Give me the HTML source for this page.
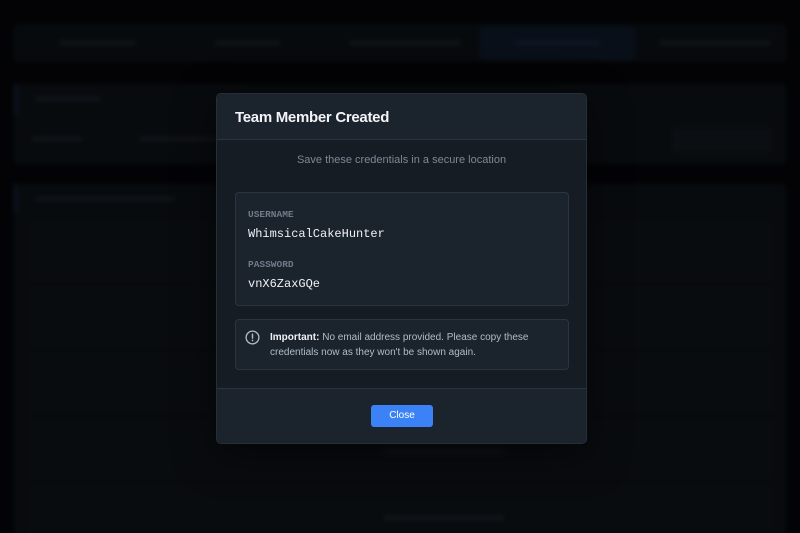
<!DOCTYPE html>
<html><head><style>
*{box-sizing:border-box;margin:0;padding:0}
html,body{width:800px;height:533px;overflow:hidden}
body{background:#050608;font-family:"Liberation Sans",sans-serif;position:relative}
.bg{position:absolute;inset:0;filter:blur(2px)}
.ov{position:absolute;inset:0;background:rgba(0,0,0,.35)}
.p{position:absolute;background:#0d1116;border-radius:4px}
.t{position:absolute;height:4px;background:#1a212a;border-radius:2px}
.modal{position:absolute;left:216px;top:93px;width:371px;height:351px;background:#161c24;border:1px solid #252e39;border-radius:5px;overflow:hidden;box-shadow:0 10px 40px rgba(0,0,0,.6)}
.hd{height:46px;background:#1b232d;border-bottom:1px solid #2a3440;padding:15px 18px;color:#f2f4f7;font-weight:bold;font-size:15px;letter-spacing:-.3px}
.sub{text-align:center;color:#7d8896;font-size:11px;margin-top:14px}
.cred{position:absolute;left:18px;top:98px;width:334px;height:114px;background:#1b232d;border:1px solid #2b3540;border-radius:4px;padding:16px 12px}
.lbl{font-family:"Liberation Mono",monospace;font-size:9.5px;color:#6f7b89;font-weight:bold}
.val{font-family:"Liberation Mono",monospace;font-size:12px;color:#f0f2f5;margin-top:7px;margin-bottom:18px}
.imp{position:absolute;left:18px;top:225px;width:334px;height:51px;background:#1b232d;border:1px solid #2b3540;border-radius:4px;padding:10px 12px 0 34px;font-size:10px;line-height:15px;color:#b3bcc6}
.imp b{color:#f0f2f5}
.ft{position:absolute;left:0;top:294px;width:100%;height:57px;background:#1b232d;border-top:1px solid #2a3440}
.btn{position:absolute;left:154px;top:16px;width:62px;height:22px;background:#3b82f6;border-radius:3px;color:#fff;font-size:10px;text-align:center;line-height:22px}
</style></head><body>
<div class="bg">
<div class="p" style="left:14px;top:24px;width:772px;height:38px;background:#0c1015"></div>
<div class="p" style="left:480px;top:26px;width:155px;height:34px;background:#0f1826"></div>
<div class="t" style="left:60px;top:41px;width:75px"></div>
<div class="t" style="left:215px;top:41px;width:65px"></div>
<div class="t" style="left:350px;top:41px;width:110px"></div>
<div class="t" style="left:515px;top:41px;width:85px;background:#15243a"></div>
<div class="t" style="left:660px;top:41px;width:110px"></div>
<div class="p" style="left:14px;top:84px;width:772px;height:80px"></div>
<div class="p" style="left:14px;top:84px;width:3px;height:32px;background:#14233a"></div>
<div class="t" style="left:35px;top:97px;width:65px"></div>
<div class="t" style="left:32px;top:137px;width:50px"></div>
<div class="t" style="left:140px;top:137px;width:80px"></div>
<div class="p" style="left:672px;top:127px;width:100px;height:26px;background:#11161c"></div>
<div class="p" style="left:14px;top:184px;width:772px;height:360px"></div>
<div class="p" style="left:14px;top:184px;width:3px;height:30px;background:#14233a"></div>
<div class="t" style="left:35px;top:197px;width:140px"></div>
<div class="p" style="left:28px;top:222px;width:745px;height:58px;background:#0f1318"></div>
<div class="p" style="left:28px;top:288px;width:745px;height:58px;background:#0f1318"></div>
<div class="p" style="left:28px;top:354px;width:745px;height:58px;background:#0f1318"></div>
<div class="p" style="left:28px;top:420px;width:745px;height:58px;background:#0f1318"></div>
<div class="p" style="left:28px;top:486px;width:745px;height:58px;background:#0f1318"></div>
<div class="t" style="left:384px;top:450px;width:120px"></div>
<div class="t" style="left:384px;top:516px;width:120px"></div>
</div>
<div class="ov"></div>
<div class="modal">
<div class="hd">Team Member Created</div>
<div class="sub">Save these credentials in a secure location</div>
<div class="cred">
<div class="lbl">USERNAME</div><div class="val">WhimsicalCakeHunter</div>
<div class="lbl">PASSWORD</div><div class="val">vnX6ZaxGQe</div>
</div>
<div class="imp">
<svg style="position:absolute;left:9px;top:10px" width="15" height="15" viewBox="0 0 16 16"><circle cx="8" cy="8" r="6.8" fill="none" stroke="#b3bcc6" stroke-width="1.4"/><path d="M8 4.5v4.2" stroke="#b3bcc6" stroke-width="1.5" stroke-linecap="round"/><circle cx="8" cy="11.2" r=".9" fill="#b3bcc6"/></svg>
<b>Important:</b> No email address provided. Please copy these credentials now as they won't be shown again.
</div>
<div class="ft"><div class="btn">Close</div></div>
</div>
</body></html>
